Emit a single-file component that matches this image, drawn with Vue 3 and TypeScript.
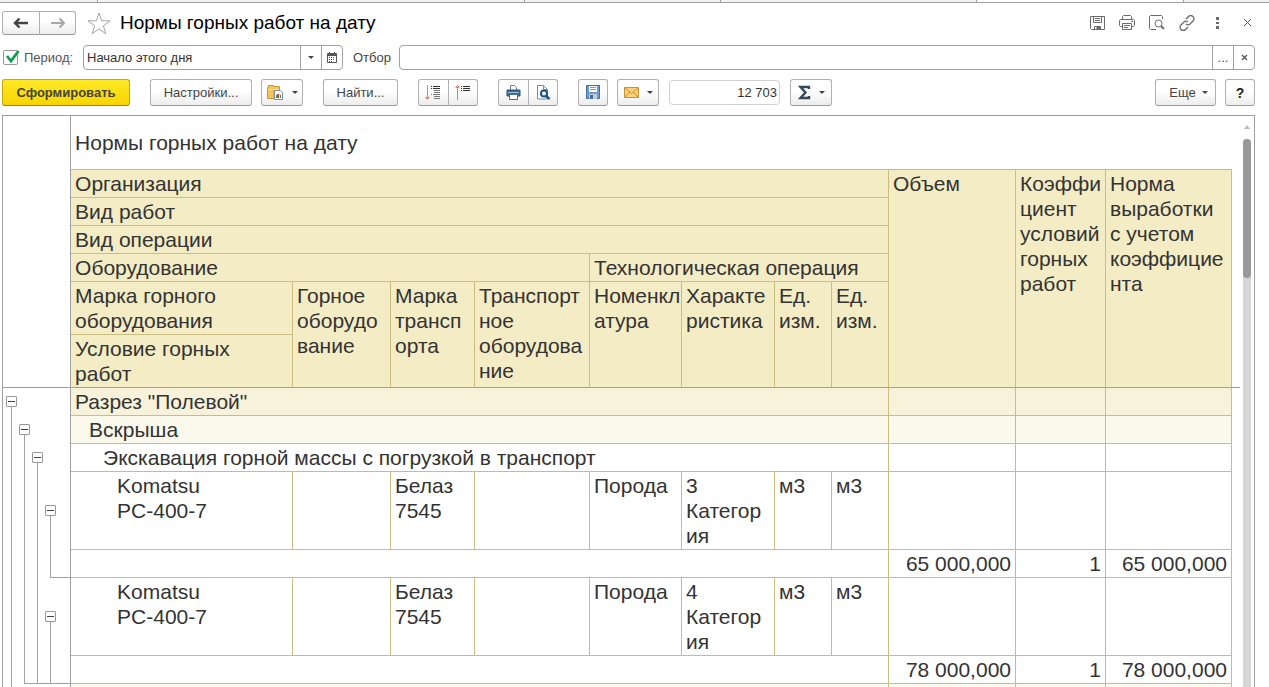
<script setup lang="ts">
import { ref } from 'vue'

type Track = '' | 'line' | 'box' | 'corner' | 'base' | 'corner base'

interface Row {
  kind: 'group1' | 'group2' | 'group3' | 'detail' | 'total'
  tracks: Track[]
  cells: string[]
}

const period = ref('Начало этого дня')
const filter = ref('')
const usePeriod = ref(true)
const total = ref('12 703')

const rows: Row[] = [
  { kind: 'group1', tracks: ['box', '', '', '', ''], cells: ['Разрез "Полевой"', '', '', ''] },
  { kind: 'group2', tracks: ['line', 'box', '', '', ''], cells: ['Вскрыша', '', '', ''] },
  { kind: 'group3', tracks: ['line', 'line', 'box', '', ''], cells: ['Экскавация горной массы с погрузкой в транспорт', '', '', ''] },
  { kind: 'detail', tracks: ['line', 'line', 'line', 'box', ''], cells: ['Komatsu\nPC-400-7', '', 'Белаз\n7545', '', 'Порода', '3\nКатегория', 'м3', 'м3', '', '', ''] },
  { kind: 'total', tracks: ['line', 'line', 'line', 'corner', 'base'], cells: ['', '65 000,000', '1', '65 000,000'] },
  { kind: 'detail', tracks: ['line', 'line', 'line', 'box', ''], cells: ['Komatsu\nPC-400-7', '', 'Белаз\n7545', '', 'Порода', '4\nКатегория', 'м3', 'м3', '', '', ''] },
  { kind: 'total', tracks: ['line', 'corner', 'corner base', 'corner base', 'base'], cells: ['', '78 000,000', '1', '78 000,000'] },
  { kind: 'group2', tracks: ['line', '', '', '', ''], cells: ['', '', '', ''] },
]
</script>

<template>
  <div class="page">
    <div class="tabs"><i class="t1"></i><i class="t2"></i><i class="t3"></i><i class="t4"></i><i class="t5"></i><i class="t6"></i></div>

    <header class="head">
      <div class="group nav">
        <button class="btn" aria-label="Назад"><svg width="16" height="12" viewBox="0 0 16 12"><path d="M2 6h13M6.500 1.500L2 6l4.500 4.500" fill="none" stroke="#444" stroke-width="2.400" /></svg></button>
        <button class="btn" aria-label="Вперед"><svg width="16" height="12" viewBox="0 0 16 12"><path d="M1 6h13M9.500 1.500L14 6l-4.500 4.500" fill="none" stroke="#a8a8a8" stroke-width="2" /></svg></button>
      </div>
      <button class="plain star" aria-label="В избранное"><svg width="24" height="23" viewBox="0 0 24 23"><path d="M12 1l2.600 7.800h8.400l-6.600 5 2.400 8-6.800-4.900-6.800 4.900 2.400-8L1 8.800h8.400z" fill="#fff" stroke="#a5a5a5" /></svg></button>
      <h1>Нормы горных работ на дату</h1>
      <div class="tools">
        <button class="plain" aria-label="Сохранить"><svg width="16" height="16" viewBox="0 0 16 16" fill="none" stroke="#6b6b6b"><path d="M1.500 1.500h14v13h-13l-1-1z" /><path d="M4.500 1.500v6h8v-6M6 3.500h5M6 5.500h5M5.500 14.500v-3h6v3" /><path d="M8 11.500h3v3H8z" fill="#6b6b6b" /></svg></button>
        <button class="plain" aria-label="Печать"><svg width="16" height="16" viewBox="0 0 16 16" fill="none" stroke="#6b6b6b"><path d="M3.500 4.500v-3l1-1h7l1 1v3M3.500 11.500h-2l-1-1v-5l1-1h13l1 1v5l-1 1h-2M3.500 8.500h9v6h-9zM5 10.500h6M5 12.500h4M12 6.500h2" /></svg></button>
        <button class="plain" aria-label="Просмотр"><svg width="16" height="16" viewBox="0 0 16 16" fill="none" stroke="#6b6b6b"><path d="M7 14.500H1.500l-1-1v-12l1-1h11l1 1V4" /><circle cx="9.500" cy="8.500" r="3.500" /><path d="M12 11l3 3" stroke-width="2" /></svg></button>
        <button class="plain" aria-label="Ссылка"><svg width="16" height="16" viewBox="0 0 16 16" fill="none" stroke="#6b6b6b" stroke-width="1.300"><path d="M7 4l2.500-2.500a3 3 0 0 1 4.500 0 3 3 0 0 1 0 4.500L11 9a3 3 0 0 1-4 0M9 12l-2.500 2.500a3 3 0 0 1-4.500 0 3 3 0 0 1 0-4.500L5 7a3 3 0 0 1 4 0" /></svg></button>
        <button class="plain" aria-label="Еще действия"><svg width="16" height="16" viewBox="0 0 16 16" fill="#6b6b6b"><path d="M7 2h3v3H7zM7 7h3v2H7zM7 11h3v3H7z" /></svg></button>
        <button class="plain" aria-label="Закрыть"><svg width="16" height="16" viewBox="0 0 16 16" fill="none" stroke="#555"><path d="M5 4l7 7M12 4l-7 7" /></svg></button>
      </div>
    </header>

    <div class="filters">
      <label class="check">
        <input v-model="usePeriod" type="checkbox" />
        <svg v-if="usePeriod" width="16" height="16" viewBox="0 0 16 16"><path d="M3 6l4 5L14.500 1" fill="none" stroke="#0f9d4e" stroke-width="2.800" /></svg>
        <span>Период:</span>
      </label>
      <div class="field period">
        <input v-model="period" type="text" aria-label="Период" />
        <button aria-label="Выбрать из списка"><span class="arrow"></span></button>
        <button aria-label="Календарь"><svg width="10" height="11" viewBox="0 0 10 11"><path d="M.5 1.500h9v9h-9z" fill="none" stroke="#555" /><path d="M1 2h8v2H1z" fill="#555" /><path d="M2.500 0v2M7.500 0v2M2 5.500h6M2 7.500h6M2 9.500h4" stroke="#555" stroke-dasharray="1 1" /></svg></button>
      </div>
      <label for="filter" class="caption">Отбор</label>
      <div class="field wide">
        <input id="filter" v-model="filter" type="text" />
        <button aria-label="Выбрать">...</button>
        <button aria-label="Очистить"><svg width="7" height="7" viewBox="0 0 7 7"><path d="M1 1l5 5M6 1L1 6" stroke="#555" stroke-width="1.300" /></svg></button>
      </div>
    </div>

    <div class="toolbar">
      <button class="btn main">Сформировать</button>
      <button class="btn settings">Настройки...</button>
      <button class="btn drop" aria-label="Варианты отчета">
        <svg width="17" height="17" viewBox="0 0 17 17"><path d="M.5 3.500h1v-2h5v1h6v4H7v8H.5z" fill="#f2c55c" stroke="#c9963a" /><path d="M1 5.500h11" stroke="#fbe3a0" /><path d="M7.500 6.500h6l2 2v7h-8z" fill="#fff" stroke="#7d8ea5" /><path d="M9.500 14v-3" stroke="#3a9a4a" /><path d="M11 14v-4" stroke="#e03c31" stroke-width="2" /><path d="M13.500 14v-3" stroke="#3a9a4a" /></svg>
        <span class="arrow"></span>
      </button>
      <button class="btn find">Найти...</button>
      <div class="group pair">
        <button class="btn" aria-label="Развернуть группы"><svg width="17" height="16" viewBox="0 0 17 16"><path d="M2.500 0v13" stroke="#f08050" /><path d="M2.500 15L0 12h5z" fill="#f08050" /><path d="M6 1.500h1M8 1.500h7M8 3.500h7M6 3.500h1" stroke="#333" /><path d="M9 5.500h6M9 7.500h6M6 9.500h1M8 9.500h7M9 11.500h6M9 13.500h6" stroke="#777" /></svg></button>
        <button class="btn" aria-label="Свернуть группы"><svg width="17" height="16" viewBox="0 0 17 16"><path d="M2.500 1v14" stroke="#f08050" /><path d="M2.500 0L0 3h5z" fill="#f08050" /><path d="M6 1.500h1M8 1.500h7M6 3.500h1M8 3.500h7M6 5.500h1M8 5.500h7" stroke="#333" /></svg></button>
      </div>
      <div class="group pair">
        <button class="btn" aria-label="Печать"><svg width="15" height="15" viewBox="0 0 15 15"><path d="M4.500 5.500v-5h4l2 2v3" fill="#fff" stroke="#6d8299" /><path d="M1 5h13v6H1z" fill="#3b6a94" stroke="#2a5278" /><path d="M2 7.500h11" stroke="#9cc0de" /><path d="M3.500 9.500h8v5h-8z" fill="#fff" stroke="#4a6988" /></svg></button>
        <button class="btn" aria-label="Предварительный просмотр"><svg width="15" height="15" viewBox="0 0 15 15"><path d="M1.500.5h6l4 4v9.500h-10z" fill="#fff" stroke="#7d8b99" /><path d="M7.500.5v4h4" fill="none" stroke="#7d8b99" /><circle cx="8" cy="8.500" r="3" fill="#fff" stroke="#12568a" stroke-width="2" /><path d="M10 11l3.500 3" stroke="#12568a" stroke-width="2.500" /></svg></button>
      </div>
      <button class="btn icon" aria-label="Сохранить"><svg width="15" height="15" viewBox="0 0 15 15"><path d="M.5.5h13v13H.5z" fill="#6c9fd0" stroke="#446f9c" /><path d="M3 1h8v6H3z" fill="#fff" /><path d="M4 2.500h6M4 4.500h6" stroke="#7f9dbc" /><path d="M3 9h8v5H3z" fill="#c4cbd2" /><path d="M4 10h3v4H4z" fill="#446f9c" /></svg></button>
      <button class="btn drop mail" aria-label="Отправить">
        <svg width="15" height="11" viewBox="0 0 15 11"><path d="M.5.5h14v10H.5z" fill="#fad37c" stroke="#cb8e2a" /><path d="M1 1l6.500 5.500L14 1M1 10l4.500-5M14 10L9.500 5" fill="none" stroke="#cb8e2a" /></svg>
        <span class="arrow"></span>
      </button>
      <input v-model="total" class="sum" type="text" aria-label="Сумма" />
      <button class="btn drop sigma" aria-label="Сумма выделенных ячеек">
        <svg width="13" height="15" viewBox="0 0 13 15"><path d="M11 4V2H2.500L7.500 7.500l-5 5.500H11v-2" fill="none" stroke="#34495a" stroke-width="2.400" /></svg>
        <span class="arrow"></span>
      </button>
      <button class="btn more">Еще <span class="arrow"></span></button>
      <button class="btn help">?</button>
    </div>

    <main class="panel">
      <div class="sheet">
        <table>
          <colgroup>
            <col class="g1" /><col class="g2" /><col class="g2" /><col class="g2" /><col class="g5" />
            <col class="c1" /><col class="c2" /><col class="c3" /><col class="c4" /><col class="c5" /><col class="c6" />
            <col class="c7" /><col class="c7" /><col class="c9" /><col class="c10" /><col class="c11" /><col class="tail" />
          </colgroup>
          <thead>
            <tr><td class="gutter" colspan="5" rowspan="7"></td><td class="title" colspan="11">Нормы горных работ на дату</td><td class="tail" rowspan="7"></td></tr>
            <tr>
              <th colspan="8">Организация</th>
              <th rowspan="6" class="last">Объем</th>
              <th rowspan="6" class="last">Коэффициент условий горных работ</th>
              <th rowspan="6" class="last">Норма выработки с учетом коэффициента</th>
            </tr>
            <tr><th colspan="8">Вид работ</th></tr>
            <tr><th colspan="8">Вид операции</th></tr>
            <tr><th colspan="4">Оборудование</th><th colspan="4">Технологическая операция</th></tr>
            <tr>
              <th>Марка горного оборудования</th>
              <th rowspan="2" class="last">Горное оборудование</th>
              <th rowspan="2" class="last">Марка транспорта</th>
              <th rowspan="2" class="last">Транспортное оборудование</th>
              <th rowspan="2" class="last tight">Номенклатура</th>
              <th rowspan="2" class="last">Характеристика</th>
              <th rowspan="2" class="last">Ед. изм.</th>
              <th rowspan="2" class="last">Ед. изм.</th>
            </tr>
            <tr><th class="last">Условие горных работ</th></tr>
          </thead>
          <tbody>
            <tr v-for="(row, r) in rows" :key="r" :class="row.kind">
              <td v-for="(t, i) in row.tracks" :key="'t' + i" class="track" :class="[t, { edge: i === 4 }]">
                <button v-if="t === 'box'" class="toggle" aria-label="Свернуть"></button>
              </td>
              <td v-for="(c, i) in row.cells" :key="'c' + i" class="cell" :class="{ num: row.kind === 'total' && i > 0 }" :colspan="row.kind !== 'detail' && i === 0 ? 8 : 1">{{ c }}</td>
              <td class="tail"></td>
            </tr>
          </tbody>
        </table>
      </div>
      <div class="scroll"><span class="up"></span><span class="rail"><span class="thumb"></span></span></div>
    </main>
  </div>
</template>

<style>
body { background: #fff; }
</style>

<style scoped>
* { box-sizing: border-box; }
.page { height: 100vh; display: flex; flex-direction: column; overflow: hidden; font: 13px "Liberation Sans", Arial, sans-serif; color: #444; }
button, input { font: inherit; color: inherit; margin: 0; padding: 0; }
svg { display: block; flex: none; }
.tabs { flex: none; display: flex; height: 3px; border-bottom: 1px solid #a0a0a0; background: #f2f2f2; }
.tabs i { border-right: 1px solid #a0a0a0; }
.t1 { flex: 97; } .t2 { flex: 428; } .t3 { flex: 196; } .t4 { flex: 256; } .t5 { flex: 207; background: #fff; } .tabs .t6 { flex: 85; border: 0; }

.head { flex: none; display: flex; align-items: center; height: 24px; margin: 8px 14px 10px 2px; }
.btn { height: 27px; display: flex; align-items: center; justify-content: center; border: 1px solid #b0b0b0; border-bottom-color: #999; border-radius: 3px; background: linear-gradient(#fff 40%, #ededed); flex: none; white-space: nowrap; }
.group { display: flex; flex: none; }
.group .btn:first-child { border-radius: 3px 0 0 3px; }
.group .btn:last-child { border-radius: 0 3px 3px 0; border-left: 0; }
.nav .btn { height: 24px; width: 38px; }
.nav .btn:last-child { width: 36px; }
.plain { border: 0; background: none; display: flex; align-items: center; justify-content: center; }
.star { margin: 0 9px 0 11px; }
h1 { margin: 0; font-size: 19px; line-height: 24px; font-weight: normal; color: #000; white-space: nowrap; }
.tools { margin-left: auto; display: flex; gap: 14px; }

.filters { flex: none; display: flex; align-items: center; height: 25px; margin: 0 14px 9px 3px; }
.check { position: relative; display: flex; align-items: center; gap: 6px; width: 80px; color: #555; }
.check input { appearance: none; width: 15px; height: 15px; border: 1px solid #999; border-radius: 2px; background: #fff; }
.check svg { position: absolute; left: 1px; top: 0; }
.field { display: flex; height: 25px; border: 1px solid #a0a0a0; border-radius: 4px; background: #fff; overflow: hidden; }
.field input { flex: 1; min-width: 0; border: 0; outline: 0; padding-left: 3px; color: #333; background: none; }
.field button { width: 21px; border: 0; border-left: 1px solid #a0a0a0; background: none; display: flex; align-items: center; justify-content: center; }
.period { width: 260px; }
.wide { flex: 1; }
.caption { width: 56px; padding-left: 10px; }
.arrow { width: 0; height: 0; border: 3px solid transparent; border-top-color: #444; border-bottom: 0; }

.toolbar { flex: none; display: flex; align-items: center; margin: 0 14px 9px 2px; }
.main { width: 128px; margin-right: 20px; font-weight: bold; border-color: #c5a900; border-bottom-color: #a08800; background: linear-gradient(#ffe926, #f7d400); }
.settings { width: 102px; margin-right: 9px; }
.drop { width: 42px; gap: 8px; margin-right: 20px; }
.find { width: 75px; margin-right: 20px; }
.pair { margin-right: 20px; }
.pair .btn { width: 31px; }
.pair .btn:last-child { width: 29px; }
.icon { width: 30px; margin-right: 9px; }
.mail { margin-right: 10px; }
.sum { width: 111px; height: 25px; margin-right: 10px; padding-right: 2px; text-align: right; border: 1px solid #d0d0d0; border-radius: 4px; color: #333; background: #fff; }
.sigma { margin-right: 0; }
.more { width: 61px; gap: 6px; margin-left: auto; margin-right: 9px; padding-left: 6px; }
.help { width: 30px; font-weight: bold; font-size: 14px; color: #222; }

.panel { flex: 1; min-height: 0; display: flex; margin: 0 14px 0 2px; border: 1px solid #a0a0a0; border-bottom: 0; overflow: hidden; }
.sheet { flex: 1; min-width: 0; overflow: hidden; }
table { width: 100%; table-layout: fixed; border-collapse: separate; border-spacing: 0; font-size: 21px; line-height: 25px; color: #333; }
.g1 { width: 15px; } .g2 { width: 13px; } .g5 { width: 14px; }
.c2 { width: 98px; } .c3 { width: 84px; } .c4 { width: 115px; } .c5 { width: 92px; } .c6 { width: 93px; } .c7 { width: 57px; }
.c9 { width: 127px; } .c10 { width: 90px; } .c11 { width: 126px; }
col.tail { width: 8px; }
td, th { padding: 1px 4px; text-align: left; vertical-align: top; font-weight: normal; overflow-wrap: anywhere; }
th { background: #f4ecc5; border: solid #c9be80; border-width: 0 1px 1px 0; }
th.last { border-bottom-color: #a0a0a0; }
th.tight { padding-right: 0; }
td.gutter { border-right: 1px solid #a0a0a0; border-bottom: 1px solid #a0a0a0; padding: 0; }
td.title { height: 54px; vertical-align: middle; border-bottom: 1px solid #c9be80; }
td.tail { padding: 0; }
thead td.tail { border-bottom: 1px solid #a0a0a0; }
.cell { height: 28px; border: solid #c9be80; border-width: 0 1px 1px 0; white-space: pre-line; }
.group1 .cell { background: #f8f2da; }
.group2 .cell { background: #fbf9ec; }
.group2 .cell:nth-child(6) { padding-left: 18px; }
.group3 .cell:nth-child(6) { padding-left: 32px; }
.detail .cell:nth-child(6) { padding-left: 46px; }
.detail .cell { height: 78px; }
td.num { text-align: right; }
.track { padding: 0 1px 2px 0; text-align: right; vertical-align: middle; line-height: 0; background-repeat: no-repeat; }
.track.edge { border-right: 1px solid #a0a0a0; }
.line { background-image: linear-gradient(#a0a0a0, #a0a0a0); background-position: right 6px top; background-size: 1px 100%; }
.box { background-image: linear-gradient(#a0a0a0, #a0a0a0); background-position: right 6px bottom; background-size: 1px 50%; }
.corner { background-image: linear-gradient(#a0a0a0, #a0a0a0), linear-gradient(#a0a0a0, #a0a0a0); background-position: right 6px top, right bottom; background-size: 1px 100%, 7px 1px; }
.base { background-image: linear-gradient(#a0a0a0, #a0a0a0); background-position: left bottom; background-size: 100% 1px; }
.corner.base { background-image: linear-gradient(#a0a0a0, #a0a0a0), linear-gradient(#a0a0a0, #a0a0a0); background-position: right 6px top, left bottom; background-size: 1px 100%, 100% 1px; }
.toggle { display: inline-block; vertical-align: middle; width: 11px; height: 11px; border: 1px solid #999; border-radius: 1px; background: linear-gradient(#444, #444) center / 7px 1px no-repeat #fff; }
.scroll { width: 14px; flex: none; display: flex; flex-direction: column; align-items: center; padding-top: 9px; }
.up { border: 3px solid transparent; border-bottom: 4px solid #bbb; border-top: 0; }
.rail { flex: 1; width: 8px; margin-top: 10px; background: #d5d5d5; border-radius: 4px 4px 0 0; }
.thumb { display: block; height: 139px; border-radius: 4px; background: #999; }
</style>
